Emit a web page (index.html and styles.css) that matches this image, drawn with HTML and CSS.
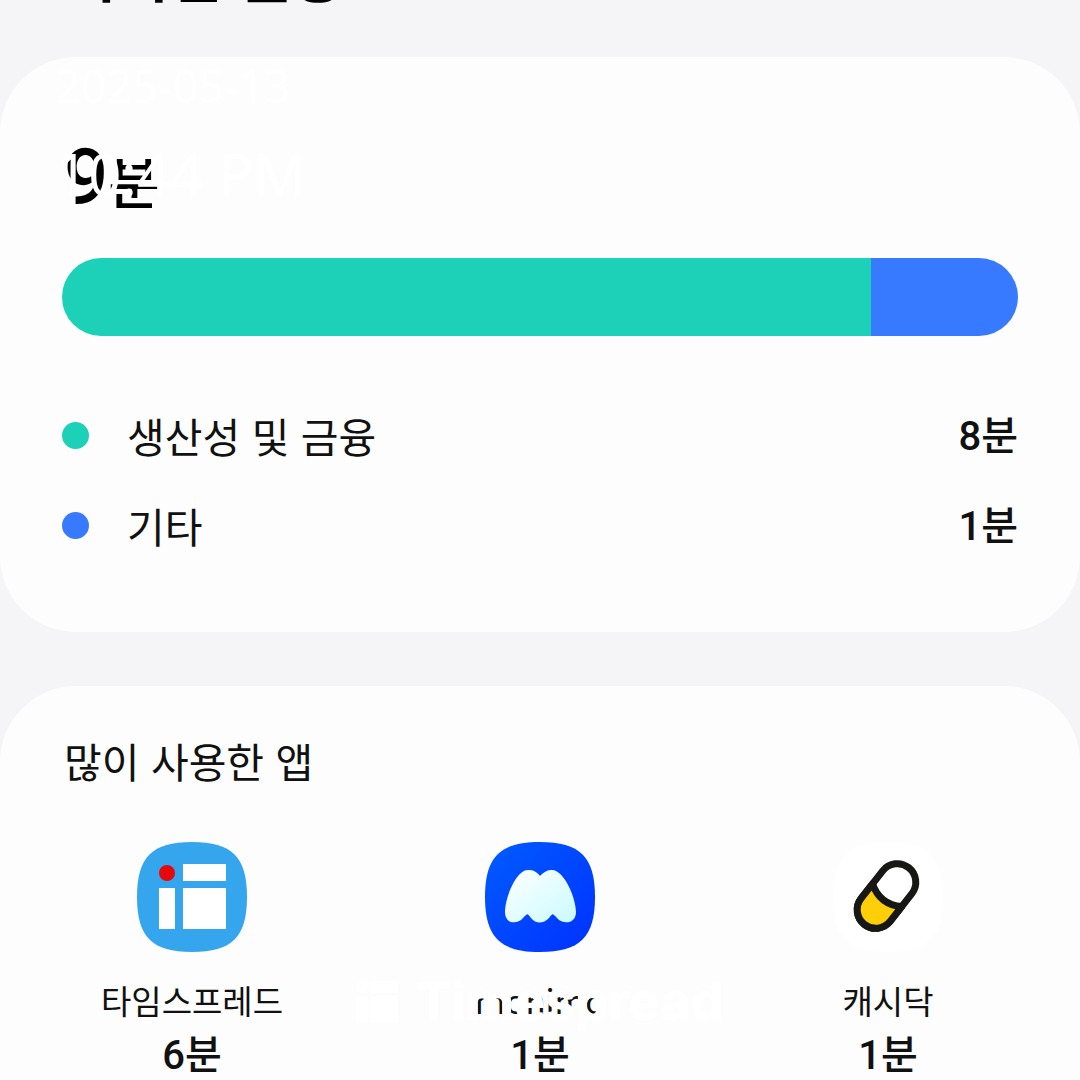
FILE: index.html
```
<!DOCTYPE html>
<html lang="ko">
<head>
<meta charset="UTF-8">
<meta name="viewport" content="width=device-width, initial-scale=1.0">
<title>디지털 웰빙</title>
<link rel="stylesheet" href="styles.css">
</head>
<body>
<h1 class="page-title">디지털 웰빙</h1>
<main class="cards">
    <section class="card usage">
        <p class="total"><span class="total-number">9</span>분</p>
        <div class="usage-bar">
            <div class="bar-part green" style="width: 84.6%"></div>
            <div class="bar-part blue"></div>
        </div>
        <ul class="legend">
            <li><span class="dot green"></span><span class="name">생산성 및 금융</span><span class="time">8분</span></li>
            <li><span class="dot blue"></span><span class="name">기타</span><span class="time">1분</span></li>
        </ul>
    </section>
    <section class="card top-apps">
        <h2>많이 사용한 앱</h2>
        <ul class="apps">
            <li>
                <svg class="app-icon" viewBox="0 0 110 110" aria-hidden="true">
                    <path fill="#35a5ed" d="M55 0C95 0 110 15 110 55S95 110 55 110 0 95 0 55 15 0 55 0Z"/>
                    <path fill="#fff" d="M46 22h43v17H46zM22 46h16v41H22zM46 46h43v41H46z"/>
                    <circle cx="30" cy="31" r="8" fill="#e6080b"/>
                </svg>
                <span class="app-name">타임스프레드</span>
                <span class="time">6분</span>
            </li>
            <li>
                <svg class="app-icon" viewBox="0 0 110 110" aria-hidden="true">
                    <defs>
                        <linearGradient id="app-blue" x1="0" y1="0" x2="1" y2="1">
                            <stop offset="0" stop-color="#005cff"/>
                            <stop offset="1" stop-color="#0031ff"/>
                        </linearGradient>
                        <linearGradient id="app-white" x1="0" y1="0" x2="1" y2="1">
                            <stop offset="0" stop-color="#fff"/>
                            <stop offset="1" stop-color="#c9fbff"/>
                        </linearGradient>
                    </defs>
                    <path fill="url(#app-blue)" d="M55 0C95 0 110 15 110 55S95 110 55 110 0 95 0 55 15 0 55 0Z"/>
                    <path fill="url(#app-white)" d="M55 34C60 29 63 28 67 28C79 28 91 56 91 70C91 82 78 83 72 76C67 71 68 71 64 76C58 82 51 82 46 76C42 71 43 71 38 76C32 83 20 82 20 70C20 56 31 28 43 28C48 28 51 29 55 34Z"/>
                </svg>
                <span class="app-name">monimo</span>
                <span class="time">1분</span>
            </li>
            <li>
                <svg class="app-icon" viewBox="0 0 110 110" aria-hidden="true">
                    <path fill="#fff" d="M55 0C95 0 110 15 110 55S95 110 55 110 0 95 0 55 15 0 55 0Z"/>
                    <g transform="rotate(38 53.5 54)" fill="#fff" stroke="#171815" stroke-width="7" stroke-linejoin="round">
                        <rect x="35" y="18" width="37" height="72" rx="18.5"/>
                        <path fill="#fdcf08" d="M35 53Q53.5 65 72 53V71.5A18.5 18.5 0 0 1 35 71.5Z"/>
                    </g>
                </svg>
                <span class="app-name">캐시닥</span>
                <span class="time">1분</span>
            </li>
        </ul>
    </section>
</main>
<div class="stamp">
    <span class="stamp-date">2025-05-13</span>
    <span class="stamp-time">10:44 PM</span>
</div>
<div class="watermark">
    <svg viewBox="0 0 42 42" aria-hidden="true">
        <circle cx="6" cy="6" r="6"/>
        <path d="M15 0h27v12H15zM0 15h12v27H0zM15 15h27v27H15z"/>
    </svg>
    <span>Timespread</span>
</div>
</body>
</html>
```
FILE: styles.css
```
* {
    box-sizing: border-box;
}
body {
    font-family: "Noto Sans CJK KR", sans-serif;
    background-color: #f5f5f8;
    color: #111;
    margin: 0;
    height: 100vh;
    overflow: hidden;
    position: relative;
}
h1, h2, p, ul {
    margin: 0;
    padding: 0;
}
ul {
    list-style: none;
}
/* scrolled almost out of view */
.page-title {
    font-size: 57px;
    line-height: 60px;
    font-weight: 700;
    color: #000;
    padding: 0 64px;
    margin-top: -58px;
    margin-bottom: 55px;
}
.cards {
    display: flex;
    flex-direction: column;
    gap: 54px;
}
.card {
    background-color: #fcfdfc;
    border-radius: 76px;
    padding: 50px 62px;
}
.usage {
    padding-top: 88px;
    padding-bottom: 62px;
}
.top-apps {
    padding-bottom: 120px;
}
.total {
    font-family: Roboto, "Noto Sans CJK KR", sans-serif;
    font-size: 56px;
    line-height: 80px;
    height: 80px;
    font-weight: 500;
    color: #000;
    padding-left: 2px;
}
.total-number {
    font-size: 78px;
    line-height: 64px;
}
.usage-bar {
    display: flex;
    height: 78px;
    border-radius: 39px;
    overflow: hidden;
    margin-top: 33px;
    margin-bottom: 54px;
}
.green {
    background-color: #1dd0b8;
}
.blue {
    background-color: #387aff;
}
.bar-part.blue {
    flex: 1;
}
.legend li {
    display: flex;
    align-items: center;
    height: 90px;
}
.dot {
    width: 27px;
    height: 27px;
    border-radius: 50%;
    margin-right: 38px;
}
.name {
    flex: 1;
    font-size: 41px;
}
.time {
    font-family: Roboto, "Noto Sans CJK KR", sans-serif;
    font-size: 40px;
    line-height: 52px;
    font-weight: 500;
    padding-top: 4px;
}
h2 {
    font-size: 41px;
    line-height: 48px;
    font-weight: 400;
    padding-left: 2px;
}
.apps {
    display: grid;
    grid-template-columns: repeat(3, 1fr);
    margin: 58px -44px 0;
}
.apps li {
    display: flex;
    flex-direction: column;
    align-items: center;
}
.app-icon {
    width: 110px;
    height: 110px;
    margin-bottom: 22px;
}
.app-name {
    font-size: 33px;
    line-height: 52px;
}
/* white overlay printed over the page */
.stamp {
    position: absolute;
    top: 56px;
    left: 55px;
    display: flex;
    flex-direction: column;
    gap: 18px;
    color: #fff;
    font-family: "Noto Sans", sans-serif;
}
.stamp-date {
    font-size: 45px;
    line-height: 60px;
}
.stamp-time {
    font-size: 58px;
    line-height: 80px;
}
.watermark {
    position: absolute;
    top: 970px;
    left: 0;
    right: 0;
    display: flex;
    justify-content: center;
    align-items: center;
    gap: 18px;
    color: #fff;
    font-family: Inter, sans-serif;
    font-size: 52px;
    line-height: 64px;
    font-weight: 800;
}
.watermark svg {
    width: 42px;
    height: 42px;
    fill: #fff;
}
```
